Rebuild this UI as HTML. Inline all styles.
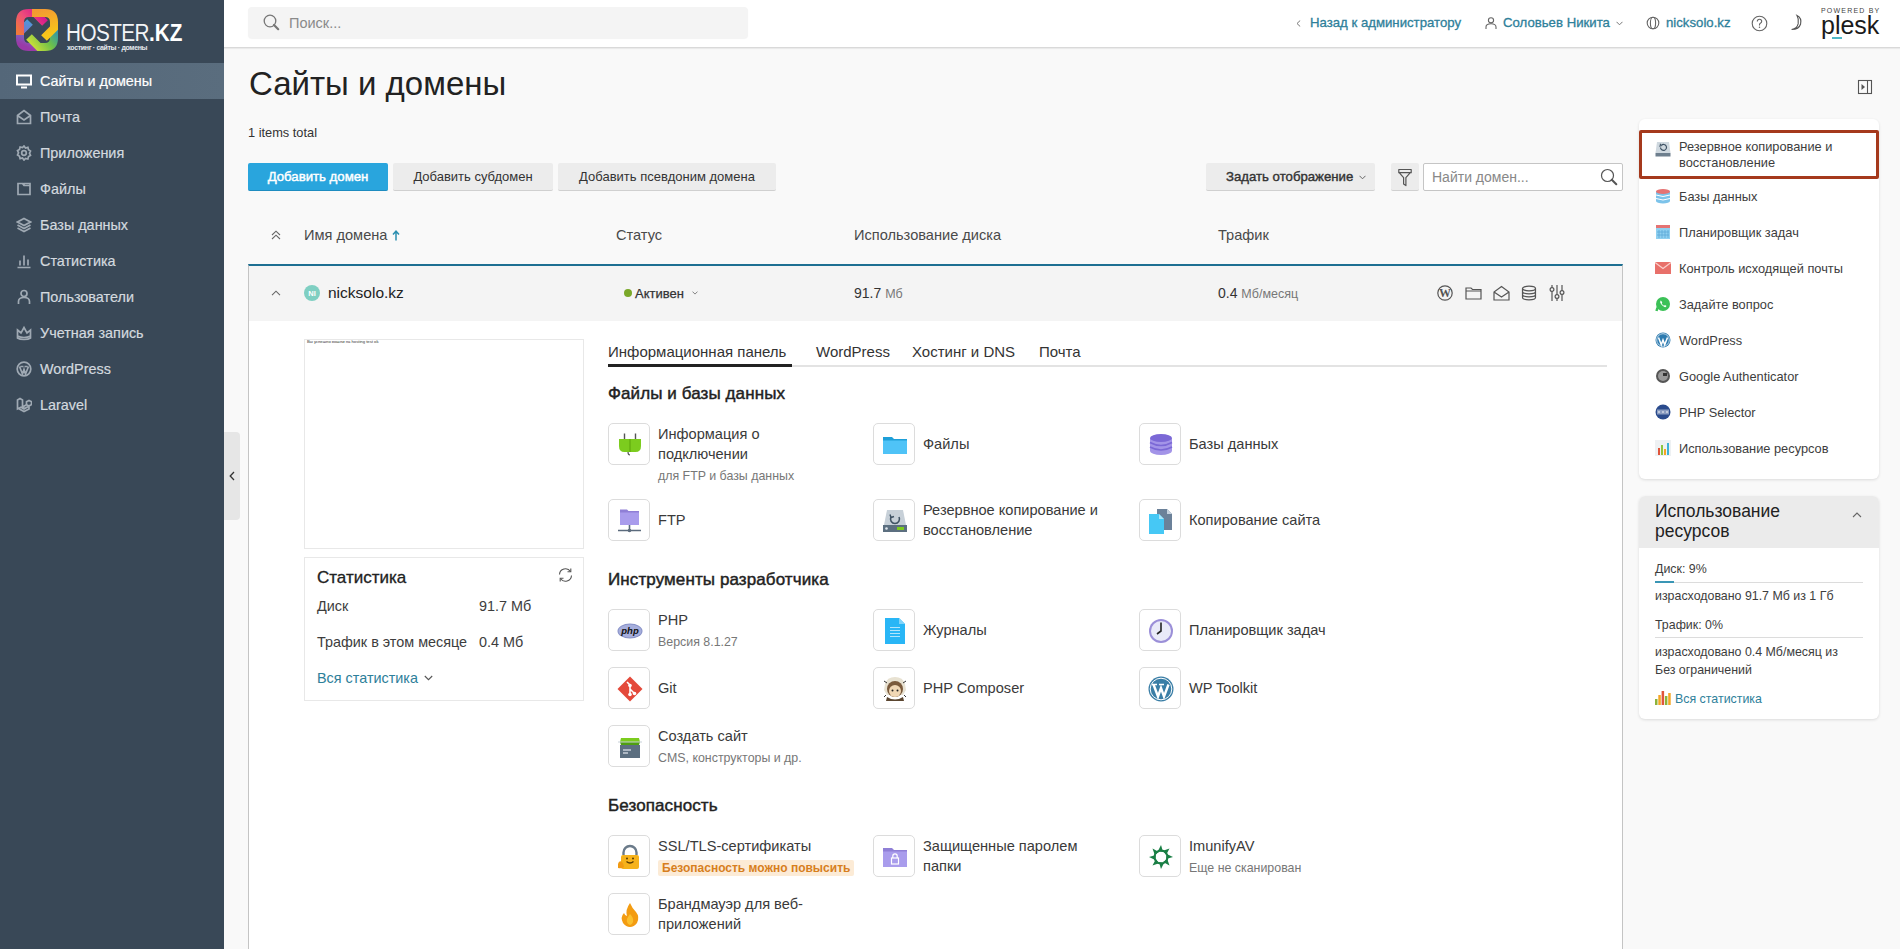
<!DOCTYPE html>
<html><head><meta charset="utf-8">
<style>
*{box-sizing:border-box;margin:0;padding:0}
html,body{width:1900px;height:949px;overflow:hidden}
body{font-family:"Liberation Sans",sans-serif;background:#f9f9f9;color:#222;position:relative}
.abs{position:absolute;white-space:nowrap}
#side{position:absolute;left:0;top:0;width:224px;height:949px;background:#394857}
#side .nav{position:absolute;left:0;width:224px;height:36px;color:#d3d9df;-webkit-text-stroke:0.2px currentColor;font-size:14.4px;line-height:36px;padding-left:40px;white-space:nowrap}
#side .nav.act{background:linear-gradient(90deg,#546779,#5a6d7e);color:#fff}
#side .nav svg{position:absolute;left:16px;top:10px;fill:none;stroke:#9fa9b3;stroke-width:1.7}
#side .nav.act svg{stroke:#fff}
#hdr{position:absolute;left:224px;top:0;width:1676px;height:48px;background:#fff;border-bottom:1px solid #d9d9d9;box-shadow:0 1px 1px rgba(0,0,0,.06)}
#handle{position:absolute;left:224px;top:432px;width:16px;height:88px;background:#e6e6e6;border-radius:0 4px 4px 0}
.btn{position:absolute;top:163px;height:28px;background:#ececec;border-bottom:1px solid #d0d0d0;border-radius:2px;font-size:13px;line-height:27px;text-align:center;color:#333;white-space:nowrap}
.lnk{color:#2b7d96}
.semi{-webkit-text-stroke:0.3px currentColor}

.ib{position:absolute;width:42px;height:42px;background:#fff;border:1px solid #dcdcdc;border-radius:5px}
.ib svg{position:absolute;left:8px;top:8px}
.it{position:absolute;font-size:14.6px;color:#3a3a3a;line-height:20px;white-space:nowrap}
.st{position:absolute;font-size:12.4px;color:#777;line-height:15px;white-space:nowrap}
.sec{position:absolute;font-size:17px;color:#222;line-height:20px;-webkit-text-stroke:0.45px #222;letter-spacing:0.1px;white-space:nowrap}
.tab{position:absolute;top:342px;font-size:15px;color:#333;line-height:20px;white-space:nowrap}

.rcard{position:absolute;left:1639px;width:240px;background:#fff;border-radius:6px;box-shadow:0 1px 3px rgba(0,0,0,.12)}
.ri{position:absolute;left:1679px;font-size:12.8px;color:#3d3d3d;line-height:16px;white-space:nowrap}
.ric{position:absolute;left:1655px}
.ract svg{position:absolute;top:285px;fill:none;stroke:#555;stroke-width:1.2}
</style></head>
<body>
<div id="side">
  <!-- logo -->
  <svg class="abs" style="left:15px;top:8px" width="46" height="46" viewBox="0 0 46 46">
    <defs>
      <linearGradient id="g1" x1="0" y1="1" x2="1" y2="0.3"><stop offset="0" stop-color="#f07a3a"/><stop offset=".5" stop-color="#ee4d7a"/><stop offset="1" stop-color="#d81b8c"/></linearGradient>
      <linearGradient id="g2" x1="0" y1="0" x2="0.3" y2="1"><stop offset="0" stop-color="#f39a32"/><stop offset="1" stop-color="#f7c51a"/></linearGradient>
      <linearGradient id="g3" x1="1" y1="0" x2="0" y2="0.7"><stop offset="0" stop-color="#2a8fb8"/><stop offset=".5" stop-color="#6cc04a"/><stop offset="1" stop-color="#c2dc3a"/></linearGradient>
      <linearGradient id="g4" x1="0.3" y1="1" x2="0.7" y2="0"><stop offset="0" stop-color="#9a3aa8"/><stop offset=".6" stop-color="#6a7fd0"/><stop offset="1" stop-color="#4a9ed8"/></linearGradient>
    </defs>
    <g fill="none" stroke-width="8">
      <path d="M27 39 H14 Q5 39 5 30 V24 L15 14" stroke="url(#g4)"/>
      <path d="M39 17 V30 Q39 39 30 39 H24 L14 29" stroke="url(#g3)"/>
      <path d="M5 27 V14 Q5 5 14 5 H20 L30 15" stroke="url(#g1)"/>
      <path d="M17 5 H30 Q39 5 39 14 V20 L29 30" stroke="url(#g2)"/>
    </g>
  </svg>
  <div class="abs" style="left:66px;top:20px;font-size:23px;color:#f2f4f6;letter-spacing:-0.6px;line-height:26px;font-weight:normal;transform:scaleX(0.9);transform-origin:0 0">HOSTER<b style="letter-spacing:0;color:#fff">.KZ</b></div>
  <div class="abs" style="left:67px;top:43px;font-size:7px;color:#e5e9ee;line-height:9px;letter-spacing:-0.35px;font-weight:bold">хостинг · сайты · домены</div>
  <div class="nav act" style="top:63px"><svg width="16" height="16" viewBox="0 0 16 16"><rect x="1" y="2.5" width="14" height="9" stroke-width="2"/><path d="M5 14.5h6" stroke-width="2"/></svg>Сайты и домены</div>
  <div class="nav" style="top:99px"><svg width="16" height="16" viewBox="0 0 16 16"><path d="M1.5 6.5v8h13v-8L8 1.5z M1.5 6.5 8 11l6.5-4.5"/></svg>Почта</div>
  <div class="nav" style="top:135px"><svg width="16" height="16" viewBox="0 0 16 16"><path d="M8 1l1.5 2 2.4-.6.6 2.4 2 1.2-1 2.2 1 2.2-2 1.2-.6 2.4-2.4-.6L8 15l-1.5-2-2.4.6-.6-2.4-2-1.2 1-2.2-1-2.2 2-1.2.6-2.4 2.4.6z"/><circle cx="8" cy="8" r="2.3"/></svg>Приложения</div>
  <div class="nav" style="top:171px"><svg width="16" height="16" viewBox="0 0 16 16"><path d="M2 2.5h4.5l1.5 2h6v9H2z M8 4.5v-2h6v2"/></svg>Файлы</div>
  <div class="nav" style="top:207px"><svg width="16" height="16" viewBox="0 0 16 16"><path d="M8 1.5 14.5 5 8 8.5 1.5 5z M1.5 8 8 11.5 14.5 8 M1.5 11 8 14.5 14.5 11"/></svg>Базы данных</div>
  <div class="nav" style="top:243px"><svg width="16" height="16" viewBox="0 0 16 16"><path d="M1.5 14.5h13 M4 12.5v-5 M8 12.5v-10 M12 12.5v-6"/></svg>Статистика</div>
  <div class="nav" style="top:279px"><svg width="16" height="16" viewBox="0 0 16 16"><circle cx="8" cy="4.5" r="3"/><path d="M2.5 15v-2.5q0-4 5.5-4t5.5 4V15"/></svg>Пользователи</div>
  <div class="nav" style="top:315px"><svg width="16" height="16" viewBox="0 0 16 16"><path d="M1.5 5l3.5 3L8 2.5 11 8l3.5-3v8q-2 1.5-6.5 1.5T1.5 13z M1.5 11q3 1.5 6.5 1.5t6.5-1.5"/></svg>Учетная запись</div>
  <div class="nav" style="top:351px"><svg width="16" height="16" viewBox="0 0 16 16"><circle cx="8" cy="8" r="6.8"/><path d="M3.5 5.5 6.5 13 8 8.5 9.5 13l3-7.5 M4.5 5.5h3 M8.5 5.5h3"/></svg>WordPress</div>
  <div class="nav" style="top:387px"><svg width="16" height="16" viewBox="0 0 16 16"><path d="M1.5 3 4 1.5 6.5 3v7l4-2.3V4.8L13 3.5l2.5 1.3v2.8L8 12 5 10.3 1.5 12V3z M6.5 10 9 11.5 M10.5 7.7l2.5 1.4v2.8L8 14.5 1.5 11"/></svg>Laravel</div>
</div>
<div id="hdr"></div>
<!-- header contents -->
<div class="abs" style="left:248px;top:7px;width:500px;height:31px;background:#f4f4f4;border-radius:4px;box-shadow:0 1px 1px rgba(0,0,0,.05)"></div>
<svg class="abs" style="left:263px;top:14px" width="17" height="17" viewBox="0 0 17 17"><circle cx="7" cy="7" r="5.8" fill="none" stroke="#777" stroke-width="1.3"/><path d="M11 11l4.2 4.2" stroke="#777" stroke-width="2.2" stroke-linecap="round"/></svg>
<div class="abs" style="left:289px;top:15px;font-size:14.5px;color:#8a8a8a;line-height:17px">Поиск...</div>

<svg class="abs" style="left:1296px;top:20px" width="5" height="7" viewBox="0 0 5 7"><path d="M4.2 .5 1 3.5l3.2 3" fill="none" stroke="#777" stroke-width="1"/></svg>
<div class="abs lnk semi" style="left:1310px;top:14px;font-size:13.2px;line-height:17px;color:#2e809a">Назад к администратору</div>
<svg class="abs" style="left:1485px;top:17px" width="12" height="12" viewBox="0 0 12 12"><circle cx="6" cy="3.3" r="2.6" fill="none" stroke="#666" stroke-width="1.1"/><path d="M1 12V10q0-3.2 5-3.2t5 3.2v2" fill="none" stroke="#666" stroke-width="1.1"/></svg>
<div class="abs lnk semi" style="left:1503px;top:14px;font-size:13.2px;line-height:17px;color:#2e809a">Соловьев Никита</div>
<svg class="abs" style="left:1616px;top:21px" width="7" height="5" viewBox="0 0 7 5"><path d="M.5 .8 3.5 3.8 6.5 .8" fill="none" stroke="#777" stroke-width="1"/></svg>
<svg class="abs" style="left:1646px;top:16px" width="14" height="14" viewBox="0 0 14 14"><circle cx="7" cy="7" r="5.8" fill="none" stroke="#666" stroke-width="1.1"/><ellipse cx="7" cy="7" rx="2.6" ry="5.8" fill="none" stroke="#666" stroke-width="1.1"/></svg>
<div class="abs lnk semi" style="left:1666px;top:14px;font-size:13.2px;line-height:17px;color:#2e809a">nicksolo.kz</div>
<svg class="abs" style="left:1751px;top:15px" width="17" height="17" viewBox="0 0 17 17"><circle cx="8.5" cy="8.5" r="7.3" fill="none" stroke="#666" stroke-width="1.1"/><path d="M6.3 6.5q0-2.3 2.2-2.3t2.2 2.1q0 1.3-1.3 1.9-.9.4-.9 1.6v.6" fill="none" stroke="#666" stroke-width="1.1"/><circle cx="8.5" cy="12.3" r=".75" fill="#666"/></svg>
<svg class="abs" style="left:1788px;top:14px" width="16" height="17" viewBox="0 0 16 17"><path d="M9 1.5q5 2.5 3.6 8.5-1.6 5.5-9 5.5 5.5-.7 6.6-5.8Q11 5 9 1.5z" fill="none" stroke="#555" stroke-width="1.1"/></svg>
<div class="abs" style="left:1821px;top:7px;font-size:7px;letter-spacing:1.2px;color:#444;line-height:8px">POWERED BY</div>
<div class="abs" style="left:1821px;top:11px;font-size:25px;letter-spacing:0px;color:#1a1a1a;line-height:28px;font-weight:normal">plesk</div>
<div class="abs" style="left:1832px;top:37px;width:10px;height:2px;background:#4fb8c8"></div>

<div id="handle"></div>
<svg class="abs" style="left:229px;top:471px" width="6" height="10" viewBox="0 0 6 10"><path d="M5 1 1.2 5 5 9" fill="none" stroke="#333" stroke-width="1.3"/></svg>

<!-- page title -->
<div class="abs" style="left:249px;top:65px;font-size:33px;color:#222;line-height:38px">Сайты и домены</div>
<div class="abs" style="left:248px;top:125px;font-size:12.8px;color:#333;line-height:15px">1 items total</div>
<svg class="abs" style="left:1857px;top:79px" width="16" height="16" viewBox="0 0 16 16"><rect x="1.5" y="1.5" width="13" height="13" fill="none" stroke="#555" stroke-width="1.1"/><path d="M10.5 1.5v13" stroke="#555" stroke-width="1.1"/><path d="M4.5 5 8 8l-3.5 3z" fill="#555"/></svg>

<!-- toolbar -->
<div class="btn" style="left:248px;width:140px;background:#29a5dd;color:#fff;-webkit-text-stroke:0.45px #fff;font-size:13.2px;border-bottom-color:#1e8cc0">Добавить домен</div>
<div class="btn" style="left:393px;width:160px">Добавить субдомен</div>
<div class="btn" style="left:558px;width:218px">Добавить псевдоним домена</div>
<div class="btn" style="left:1206px;width:169px;-webkit-text-stroke:0.4px #333;font-size:13.2px;text-align:left;padding-left:20px">Задать отображение</div>
<svg class="abs" style="left:1359px;top:175px" width="7" height="5" viewBox="0 0 7 5"><path d="M.5 .8 3.5 3.8 6.5 .8" fill="none" stroke="#666" stroke-width="1"/></svg>
<div class="btn" style="left:1391px;width:28px"></div>
<svg class="abs" style="left:1397px;top:168px" width="16" height="19" viewBox="0 0 16 19"><path d="M1.8 1.5h12.4v3.2H1.8z M2.2 4.7 6.6 9.6v6.3l2.3 1.7V9.6l4.4-4.9" fill="none" stroke="#555" stroke-width="1.2" stroke-linejoin="round"/></svg>
<div class="abs" style="left:1423px;top:163px;width:200px;height:28px;background:#fff;border:1px solid #c5c5c5;border-radius:2px"></div>
<div class="abs" style="left:1432px;top:169px;font-size:14px;color:#888;line-height:17px">Найти домен...</div>
<svg class="abs" style="left:1600px;top:168px" width="18" height="18" viewBox="0 0 18 18"><circle cx="7.5" cy="7.5" r="6" fill="none" stroke="#555" stroke-width="1.2"/><path d="M11.8 11.8l4.5 4.5" stroke="#555" stroke-width="2" stroke-linecap="round"/></svg>


<!-- table header -->
<svg class="abs" style="left:271px;top:230px" width="10" height="10" viewBox="0 0 10 10"><path d="M1 5 5 1.2 9 5 M1 9 5 5.2 9 9" fill="none" stroke="#666" stroke-width="1.1"/></svg>
<div class="abs" style="left:304px;top:227px;font-size:14.6px;color:#4a4a4a;line-height:17px">Имя домена</div>
<svg class="abs" style="left:392px;top:230px" width="8" height="11" viewBox="0 0 8 11"><path d="M4 10.5V2 M1 4.5 4 1.2 7 4.5" fill="none" stroke="#2b8fb0" stroke-width="1.5"/></svg>
<div class="abs" style="left:616px;top:227px;font-size:14.6px;color:#4a4a4a;line-height:17px">Статус</div>
<div class="abs" style="left:854px;top:227px;font-size:14.6px;color:#4a4a4a;line-height:17px">Использование диска</div>
<div class="abs" style="left:1218px;top:227px;font-size:14.6px;color:#4a4a4a;line-height:17px">Трафик</div>

<!-- expanded panel -->
<div class="abs" style="left:248px;top:264px;width:1375px;height:700px;background:#fff;border-left:1px solid #c4c4c4;border-right:1px solid #c4c4c4;border-top:2px solid #1d6f92"></div>
<div class="abs" style="left:249px;top:266px;width:1373px;height:55px;background:#f4f4f4"></div>
<svg class="abs" style="left:271px;top:290px" width="10" height="6" viewBox="0 0 10 6"><path d="M1 5.2 5 1.2 9 5.2" fill="none" stroke="#666" stroke-width="1.1"/></svg>
<svg class="abs" style="left:304px;top:285px" width="16" height="16" viewBox="0 0 16 16"><circle cx="8" cy="8" r="8" fill="#7fcfc2"/><text x="8" y="10.8" font-size="7.5" font-weight="bold" fill="#fff" text-anchor="middle" font-family="Liberation Sans">NI</text></svg>
<div class="abs" style="left:328px;top:283px;font-size:15.5px;color:#222;line-height:19px">nicksolo.kz</div>
<div class="abs" style="left:624px;top:289px;width:8px;height:8px;border-radius:50%;background:#7aa829"></div>
<div class="abs semi" style="left:635px;top:286px;font-size:13px;color:#333;line-height:15px;-webkit-text-stroke:0.25px #333">Активен</div>
<svg class="abs" style="left:692px;top:291px" width="6" height="4" viewBox="0 0 6 4"><path d="M.5 .6 3 3.1 5.5 .6" fill="none" stroke="#777" stroke-width=".9"/></svg>
<div class="abs" style="left:854px;top:285px;font-size:14px;color:#333;line-height:17px">91.7 <span style="font-size:12.5px;color:#777">Мб</span></div>
<div class="abs" style="left:1218px;top:285px;font-size:14px;color:#333;line-height:17px">0.4 <span style="font-size:12.5px;color:#777">Мб/месяц</span></div>

<div class="abs" style="left:304px;top:339px;width:280px;height:210px;background:#fff;border:1px solid #e8e8e8"></div>
<div class="abs" style="left:307px;top:339px;font-size:4.2px;line-height:6px;color:#333">Вы успешно вошли на hosting test ok</div>
<div class="abs" style="left:304px;top:557px;width:280px;height:144px;background:#fff;border:1px solid #e8e8e8"></div>
<div class="abs" style="left:317px;top:568px;font-size:17px;color:#222;line-height:20px;-webkit-text-stroke:0.3px #222">Статистика</div>
<svg class="abs" style="left:557px;top:567px" width="17" height="16" viewBox="0 0 17 16"><path d="M2.5 7.5A6 6 0 0 1 13.5 4.5 M14.5 8.5A6 6 0 0 1 3.5 11.5" fill="none" stroke="#555" stroke-width="1.1"/><path d="M13.8 1.5v3.3h-3.3 M3.2 14.5v-3.3h3.3" fill="none" stroke="#555" stroke-width="1.1"/></svg>
<div class="abs" style="left:317px;top:598px;font-size:14.4px;color:#3d3d3d;line-height:17px">Диск</div>
<div class="abs" style="left:479px;top:598px;font-size:14.4px;color:#3d3d3d;line-height:17px">91.7 Мб</div>
<div class="abs" style="left:317px;top:634px;font-size:14.4px;color:#3d3d3d;line-height:17px">Трафик в этом месяце</div>
<div class="abs" style="left:479px;top:634px;font-size:14.4px;color:#3d3d3d;line-height:17px">0.4 Мб</div>
<div class="abs lnk" style="left:317px;top:670px;font-size:14.4px;line-height:17px;color:#2e809a">Вся статистика</div>
<svg class="abs" style="left:424px;top:675px" width="9" height="6" viewBox="0 0 9 6"><path d="M.8 1 4.5 4.7 8.2 1" fill="none" stroke="#555" stroke-width="1.1"/></svg>


<div class="abs" style="left:608px;top:365px;width:999px;height:2px;background:#e3e3e3"></div>
<div class="abs" style="left:608px;top:364px;width:184px;height:3px;background:#222"></div>
<div class="tab" style="left:608px">Информационная панель</div>
<div class="tab" style="left:816px">WordPress</div>
<div class="tab" style="left:912px">Хостинг и DNS</div>
<div class="tab" style="left:1039px">Почта</div>


<div class="sec" style="left:608px;top:384px">Файлы и базы данных</div>
<div class="sec" style="left:608px;top:570px">Инструменты разработчика</div>
<div class="sec" style="left:608px;top:796px">Безопасность</div>

<div class="ib" style="left:608px;top:423px"><svg width="26" height="26" viewBox="0 0 26 26"><path d="M7.5 1.5v6 M18.5 1.5v6" stroke="#555" stroke-width="1.4"/><path d="M2 7h22v7q0 6-5.5 6H7.5Q2 20 2 14z" fill="#7ccc1e"/><path d="M13 7v13" stroke="#66b010" stroke-width="1.5"/><path d="M11 20q0 3 2 3" stroke="#555" stroke-width="1.2" fill="none"/></svg></div><div class="it" style="left:658px;top:424px">Информация о</div><div class="it" style="left:658px;top:444px">подключении</div><div class="st" style="left:658px;top:469px">для FTP и базы данных</div>
<div class="ib" style="left:873px;top:423px"><svg width="26" height="26" viewBox="0 0 26 26"><path d="M1 5h9l2 2h13v15H1z" fill="#1e9fd8"/><path d="M1 8.5h24V22H1z" fill="#4fc3f7"/></svg></div><div class="it" style="left:923px;top:434px">Файлы</div>
<div class="ib" style="left:1139px;top:423px"><svg width="26" height="26" viewBox="0 0 26 26"><ellipse cx="13" cy="19" rx="11" ry="4" fill="#a394e8"/><rect x="2" y="6" width="22" height="13" fill="#a394e8"/><ellipse cx="13" cy="6" rx="11" ry="4" fill="#7b68d6"/><path d="M2 10.5q11 6 22 0 M2 15q11 6 22 0" stroke="#7b68d6" stroke-width="1.6" fill="none"/></svg></div><div class="it" style="left:1189px;top:434px">Базы данных</div>
<div class="ib" style="left:608px;top:499px"><svg width="26" height="26" viewBox="0 0 26 26"><path d="M3 1.5h7l1.5 1.5H22v14H3z" fill="#8f7fd6"/><path d="M3 4.5h19V17H3z" fill="#a99cec"/><path d="M12.5 17v5 M1 22.5h23" stroke="#5b6b7d" stroke-width="1.6"/><circle cx="12.5" cy="22.5" r="1.8" fill="#5b6b7d"/></svg></div><div class="it" style="left:658px;top:510px">FTP</div>
<div class="ib" style="left:873px;top:499px"><svg width="26" height="26" viewBox="0 0 26 26"><path d="M5 2h16l3 15H2z" fill="#c7d0d8"/><rect x="1" y="17" width="24" height="7" fill="#5c6f80"/><rect x="15" y="19" width="7" height="3" fill="#7ccc1e"/><circle cx="4.5" cy="20.5" r="1.3" fill="#dfe6ec"/><path d="M9 9a4.5 4.5 0 1 0 8 0" fill="none" stroke="#3f5264" stroke-width="1.6"/><path d="M8 6.5l1 3 3-1" fill="none" stroke="#3f5264" stroke-width="1.4"/></svg></div><div class="it" style="left:923px;top:500px">Резервное копирование и</div><div class="it" style="left:923px;top:520px">восстановление</div>
<div class="ib" style="left:1139px;top:499px"><svg width="26" height="26" viewBox="0 0 26 26"><path d="M9 1h10l5 5v16H9z" fill="#6b8199"/><path d="M19 1v5h5" fill="#c6d2de"/><path d="M1 6h10l5 5v15H1z" fill="#46c8f5"/><path d="M11 6v5h5z" fill="#a7e6fb"/></svg></div><div class="it" style="left:1189px;top:510px">Копирование сайта</div>
<div class="ib" style="left:608px;top:609px"><svg width="26" height="26" viewBox="0 0 26 26"><ellipse cx="13" cy="13" rx="12.5" ry="7.5" fill="#8892c8"/><ellipse cx="13" cy="13" rx="11.5" ry="6.5" fill="#a6aedc"/><text x="13" y="16" font-size="9.5" font-weight="bold" font-style="italic" fill="#111" text-anchor="middle" font-family="Liberation Sans">php</text></svg></div><div class="it" style="left:658px;top:610px">PHP</div><div class="st" style="left:658px;top:635px">Версия 8.1.27</div>
<div class="ib" style="left:873px;top:609px"><svg width="26" height="26" viewBox="0 0 26 26"><path d="M3 0h14l6 6v21H3z" fill="#29b6f6"/><path d="M17 0v6h6z" fill="#81d4fa"/><path d="M8 9.5h10 M8 12.5h10 M8 15.5h10 M8 18.5h10" stroke="#b3e5fc" stroke-width="1"/></svg></div><div class="it" style="left:923px;top:620px">Журналы</div>
<div class="ib" style="left:1139px;top:609px"><svg width="26" height="26" viewBox="0 0 26 26"><circle cx="13" cy="13" r="12" fill="#9b8fd8"/><circle cx="13" cy="13" r="10" fill="#e9eaf8"/><path d="M13 4.5V13l-4 3" stroke="#222" stroke-width="1.6" fill="none"/></svg></div><div class="it" style="left:1189px;top:620px">Планировщик задач</div>
<div class="ib" style="left:608px;top:667px"><svg width="26" height="26" viewBox="0 0 26 26"><path d="M13 0.5 25.5 13 13 25.5 0.5 13z" fill="#e4493a"/><path d="M10 6l3 3v9 M13 13l4 4" stroke="#fff" stroke-width="1.6" fill="none"/><circle cx="13" cy="9.5" r="1.8" fill="#fff"/><circle cx="13" cy="18.5" r="1.8" fill="#fff"/><circle cx="17.5" cy="17.5" r="1.8" fill="#fff"/></svg></div><div class="it" style="left:658px;top:678px">Git</div>
<div class="ib" style="left:873px;top:667px"><svg width="26" height="26" viewBox="0 0 26 26"><path d="M3 8q2-7 10-7t10 7l1 6-3 5H5l-3-5z" fill="#e8e2d2"/><circle cx="13" cy="13" r="8" fill="#7a5a3c"/><circle cx="13" cy="15" r="6" fill="#f0d7b5"/><circle cx="10.5" cy="14.5" r="1" fill="#222"/><circle cx="15.5" cy="14.5" r="1" fill="#222"/><path d="M5 21q8 5 16 0l1 4H4z" fill="#5b4630"/><path d="M2 5l3 2 M24 5l-3 2 M4 19l-2 2 M22 19l2 2" stroke="#333" stroke-width="1"/></svg></div><div class="it" style="left:923px;top:678px">PHP Composer</div>
<div class="ib" style="left:1139px;top:667px"><svg width="26" height="26" viewBox="0 0 26 26"><circle cx="13" cy="13" r="12.5" fill="#3a7ea6"/><circle cx="13" cy="13" r="10.8" fill="none" stroke="#fff" stroke-width="1"/><path d="M5.5 8.5l4.5 12 3-8.5 3 8.5 4.5-12" fill="none" stroke="#fff" stroke-width="2.4"/><path d="M4 8.5h5 M11 8.5h5" stroke="#fff" stroke-width="1.4"/></svg></div><div class="it" style="left:1189px;top:678px">WP Toolkit</div>
<div class="ib" style="left:608px;top:725px"><svg width="26" height="26" viewBox="0 0 26 26"><path d="M4 4h18l1 4H3z" fill="#7ccc1e"/><path d="M3 8h20l-1 3H4z" fill="#4fa010"/><rect x="3" y="11" width="20" height="13" fill="#5c6f80"/><path d="M6 16h8 M6 19h5" stroke="#c7d0d8" stroke-width="1.4"/><path d="M1 8h24" stroke="#c7d0d8" stroke-width="1"/></svg></div><div class="it" style="left:658px;top:726px">Создать сайт</div><div class="st" style="left:658px;top:751px">CMS, конструкторы и др.</div>
<div class="ib" style="left:608px;top:835px"><svg width="26" height="26" viewBox="0 0 26 26"><path d="M6.5 11V8.5a6.5 6.5 0 0 1 13 0V11" fill="none" stroke="#6b7b8a" stroke-width="2.4"/><rect x="4" y="11" width="18" height="14" rx="2" fill="#f6b21b"/><path d="M9.5 17.5q3.5 3 7 0" stroke="#5a3b00" stroke-width="1.4" fill="none"/><circle cx="10" cy="14.5" r="1" fill="#5a3b00"/><circle cx="16" cy="14.5" r="1" fill="#5a3b00"/><path d="M1 20q1-4 4-2 2 2 2 5-2 2-6 1z" fill="#f19a13"/></svg></div><div class="it" style="left:658px;top:836px">SSL/TLS-сертификаты</div><div class="abs" style="left:658px;top:860px;height:16px;padding:0 4px;background:#fcebd6;color:#d77f1e;font-size:12px;line-height:16px;font-weight:bold;border-radius:2px">Безопасность можно повысить</div>
<div class="ib" style="left:873px;top:835px"><svg width="26" height="26" viewBox="0 0 26 26"><path d="M1 4h9l2 2h13v17H1z" fill="#8f7fd6"/><path d="M1 7.5h24V23H1z" fill="#a99cec"/><rect x="9.5" y="14" width="7" height="6" fill="none" stroke="#fff" stroke-width="1.2"/><path d="M10.8 14v-2a2.2 2.2 0 0 1 4.4 0v2" fill="none" stroke="#fff" stroke-width="1.2"/></svg></div><div class="it" style="left:923px;top:836px">Защищенные паролем</div><div class="it" style="left:923px;top:856px">папки</div>
<div class="ib" style="left:1139px;top:835px"><svg width="26" height="26" viewBox="0 0 26 26"><g fill="#1a7f45"><path d="M25.0 13.0L18.7 9.9L18.1 15.1z"/><path d="M21.5 21.5L19.2 14.9L15.1 18.1z"/><path d="M13.0 25.0L16.1 18.7L10.9 18.1z"/><path d="M4.5 21.5L11.1 19.2L7.9 15.1z"/><path d="M1.0 13.0L7.3 16.1L7.9 10.9z"/><path d="M4.5 4.5L6.8 11.1L10.9 7.9z"/><path d="M13.0 1.0L9.9 7.3L15.1 7.9z"/><path d="M21.5 4.5L14.9 6.8L18.1 10.9z"/></g><circle cx="13" cy="13" r="6.5" fill="none" stroke="#1a7f45" stroke-width="2"/></svg></div><div class="it" style="left:1189px;top:836px">ImunifyAV</div><div class="st" style="left:1189px;top:861px">Еще не сканирован</div>
<div class="ib" style="left:608px;top:893px"><svg width="26" height="26" viewBox="0 0 26 26"><path d="M13 1q2 5 6 9 4 5 1 11-3 4-7 4t-7-4q-3-6 1-10 1 3 3 3-2-6 3-13z" fill="#f39c12"/><path d="M13 12q4 4 3 8-1 3-3 3t-3-3q-1-3 3-8z" fill="#fbc02d"/></svg></div><div class="it" style="left:658px;top:894px">Брандмауэр для веб-</div><div class="it" style="left:658px;top:914px">приложений</div>
<!-- row action icons -->
<div class="ract">
<svg style="left:1437px" width="16" height="16" viewBox="0 0 16 16"><circle cx="8" cy="8" r="7.2"/><text x="8" y="12.3" font-size="12" font-weight="bold" font-family="Liberation Serif" fill="#555" stroke="none" text-anchor="middle">W</text></svg>
<svg style="left:1465px" width="17" height="16" viewBox="0 0 17 16"><path d="M1 3h5l1.5 1.5H16V14H1z M1 6h15"/></svg>
<svg style="left:1493px" width="17" height="16" viewBox="0 0 17 16"><path d="M1 7v8h15V7L8.5 1.5z M1 7l7.5 5L16 7"/></svg>
<svg style="left:1521px" width="16" height="16" viewBox="0 0 16 16"><ellipse cx="8" cy="3.5" rx="6.5" ry="2.3"/><path d="M1.5 3.5v9q0 2.3 6.5 2.3t6.5-2.3v-9 M1.5 6.5q0 2.3 6.5 2.3t6.5-2.3 M1.5 9.5q0 2.3 6.5 2.3t6.5-2.3"/></svg>
<svg style="left:1549px" width="16" height="16" viewBox="0 0 16 16"><path d="M3 0v16 M8 0v16 M13 0v16"/><circle cx="3" cy="4.5" r="1.9" fill="#f4f4f4"/><circle cx="8" cy="11.5" r="1.9" fill="#f4f4f4"/><circle cx="13" cy="7.5" r="1.9" fill="#f4f4f4"/></svg>
</div>

<!-- right sidebar tools card -->
<div class="rcard" style="top:119px;height:360px"></div>
<div class="abs" style="left:1639px;top:130px;width:240px;height:49px;border:3px solid #a5391c;border-radius:2px"></div>
<svg class="ric" style="top:141px" width="16" height="16" viewBox="0 0 16 16"><path d="M2 1h12l1.5 11h-15z" fill="#cfd8df"/><rect x="0.5" y="12" width="15" height="3.5" fill="#6e7f8e"/><path d="M5.5 6.5a3 3 0 1 0 1-2.3" fill="none" stroke="#3f5264" stroke-width="1.2"/><path d="M5 2.8l1.2 1.8-2 .6" fill="none" stroke="#3f5264" stroke-width="1.1"/></svg>
<div class="ri" style="top:139px">Резервное копирование и</div>
<div class="ri" style="top:155px">восстановление</div>
<svg class="ric" style="top:188px" width="16" height="16" viewBox="0 0 16 16"><rect x="1" y="3" width="14" height="10" fill="#7cc3ea"/><ellipse cx="8" cy="13" rx="7" ry="2.5" fill="#7cc3ea"/><ellipse cx="8" cy="3.5" rx="7" ry="2.5" fill="#e57373"/><path d="M1 7q7 3 14 0 M1 10.5q7 3 14 0" stroke="#fff" stroke-width="1" fill="none"/></svg>
<div class="ri" style="top:189px">Базы данных</div>
<svg class="ric" style="top:224px" width="16" height="16" viewBox="0 0 16 16"><rect x="1" y="1" width="14" height="14" fill="#8fd0f0"/><rect x="1" y="1" width="14" height="3" fill="#e57373"/><path d="M4 6v8 M7 6v8 M10 6v8 M13 6v8 M2 8h12 M2 11h12" stroke="#5aa8d8" stroke-width=".8"/></svg>
<div class="ri" style="top:225px">Планировщик задач</div>
<svg class="ric" style="top:261px" width="16" height="14" viewBox="0 0 16 14"><rect x="0" y="1" width="16" height="12" fill="#e8706a"/><path d="M0 1.5l8 6 8-6" stroke="#fbd0cc" stroke-width="1.2" fill="none"/></svg>
<div class="ri" style="top:261px">Контроль исходящей почты</div>
<svg class="ric" style="top:296px" width="16" height="16" viewBox="0 0 16 16"><circle cx="8" cy="8" r="7" fill="#3cc157"/><path d="M1.5 15l1-3.5" stroke="#3cc157" stroke-width="2.5"/><path d="M5.5 4.5q-1 1.5.5 3.5t3.5 3q1.5.5 2-1l-1.5-1-1 .7q-1.5-.8-2.3-2.2l.6-1-1-1.5z" fill="#fff"/></svg>
<div class="ri" style="top:297px">Задайте вопрос</div>
<svg class="ric" style="top:332px" width="16" height="16" viewBox="0 0 16 16"><circle cx="8" cy="8" r="7.5" fill="#2d7bb0"/><circle cx="8" cy="8" r="6.3" fill="none" stroke="#fff" stroke-width=".7"/><path d="M3.5 5.5l2.8 7.3L8 8l1.7 4.8 2.8-7.3" fill="none" stroke="#fff" stroke-width="1.5"/></svg>
<div class="ri" style="top:333px">WordPress</div>
<svg class="ric" style="top:368px" width="16" height="16" viewBox="0 0 16 16"><circle cx="8" cy="8" r="7" fill="#555"/><circle cx="8" cy="8" r="5" fill="#999"/><path d="M8 5h4v3H8z" fill="#333"/></svg>
<div class="ri" style="top:369px">Google Authenticator</div>
<svg class="ric" style="top:404px" width="16" height="16" viewBox="0 0 16 16"><circle cx="8" cy="8" r="7.5" fill="#2a4b8d"/><path d="M3 5.5v5 M5 5.5v5 M3 8h2 M7 5.5v5 M9 5.5v5 M7 8h2 M11 5.5v5 M13 5.5v5 M11 8h2" stroke="#fff" stroke-width=".9"/></svg>
<div class="ri" style="top:405px">PHP Selector</div>
<svg class="ric" style="top:440px" width="16" height="16" viewBox="0 0 16 16"><rect x="0" y="0" width="16" height="16" fill="#eef1f3"/><rect x="3" y="8" width="2" height="7" fill="#e0553b"/><rect x="6" y="5" width="2" height="10" fill="#8dc63f"/><rect x="9" y="9" width="2" height="6" fill="#f5a623"/><rect x="12" y="3" width="2" height="12" fill="#3eb1d6"/></svg>
<div class="ri" style="top:441px">Использование ресурсов</div>

<!-- resource usage card -->
<div class="rcard" style="top:496px;height:223px;overflow:hidden"><div style="height:52px;background:#ebebeb"></div></div>
<div class="abs" style="left:1655px;top:501px;font-size:17.5px;color:#222;line-height:20px;white-space:normal;width:190px">Использование<br>ресурсов</div>
<svg class="abs" style="left:1852px;top:511px" width="10" height="7" viewBox="0 0 10 7"><path d="M1 6 5 2 9 6" fill="none" stroke="#666" stroke-width="1.1"/></svg>
<div class="ri" style="left:1655px;top:561px;font-size:12.4px">Диск: 9%</div>
<div class="abs" style="left:1655px;top:582px;width:208px;height:1px;background:#dcdcdc"></div>
<div class="abs" style="left:1655px;top:581px;width:19px;height:2px;background:#3a96b5"></div>
<div class="ri" style="left:1655px;top:588px;font-size:12.4px">израсходовано 91.7 Мб из 1 Гб</div>
<div class="ri" style="left:1655px;top:617px;font-size:12.4px">Трафик: 0%</div>
<div class="abs" style="left:1655px;top:637px;width:208px;height:1px;background:#dcdcdc"></div>
<div class="ri" style="left:1655px;top:644px;font-size:12.4px">израсходовано 0.4 Мб/месяц из</div>
<div class="ri" style="left:1655px;top:662px;font-size:12.4px">Без ограничений</div>
<svg class="abs" style="left:1655px;top:689px" width="16" height="16" viewBox="0 0 16 16"><rect x="0" y="10" width="2.5" height="6" fill="#8db33a"/><rect x="3.3" y="6" width="2.5" height="10" fill="#f5a623"/><rect x="6.6" y="2" width="2.5" height="14" fill="#e0553b"/><rect x="9.9" y="7" width="2.5" height="9" fill="#8db33a"/><rect x="13.2" y="4" width="2.5" height="12" fill="#f5a623"/></svg>
<div class="ri" style="left:1675px;top:691px;font-size:12.4px;color:#2e809a">Вся статистика</div>
</body></html>
